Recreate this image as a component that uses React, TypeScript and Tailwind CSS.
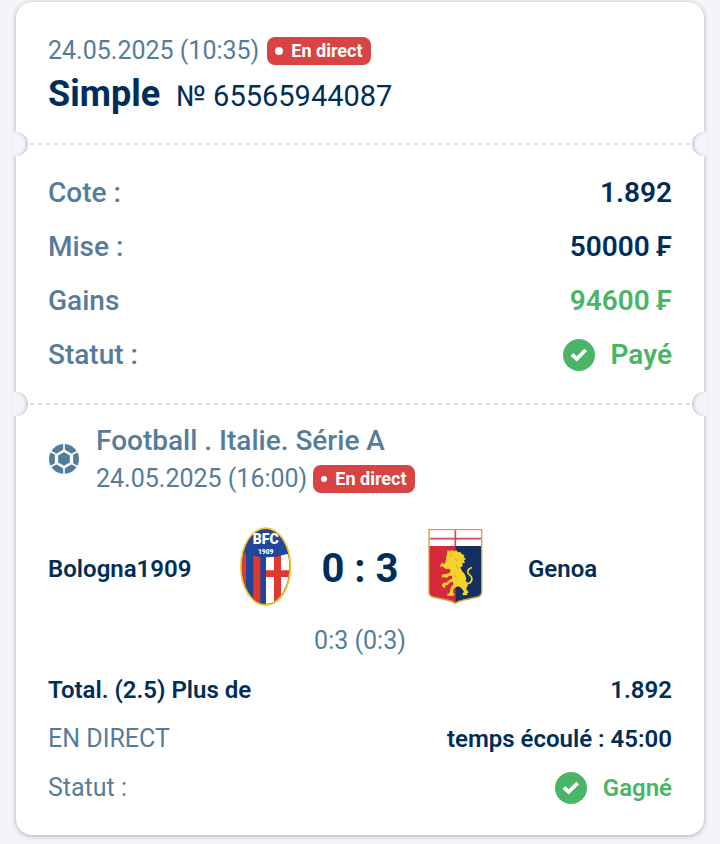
import type { ReactNode } from "react";

const Divider = () => (
  <div className="relative flex h-6 items-center px-3.5">
    <span className="absolute top-0 -left-3 size-6 rounded-full bg-[#f4f5fb] shadow-[inset_-3px_0_3px_-1px_#c9cad0] [clip-path:inset(0_0_0_9px)]" />
    <div className="h-0.5 flex-1 bg-[repeating-linear-gradient(90deg,#dddee2_0_4px,transparent_4px_8px)]" />
    <span className="absolute top-0 -right-3 size-6 rounded-full bg-[#f4f5fb] shadow-[inset_3px_0_3px_-1px_#c9cad0] [clip-path:inset(0_9px_0_0)]" />
  </div>
);

const LiveBadge = ({ small = false }: { small?: boolean }) => (
  <span className="flex h-7 items-center gap-2 rounded-lg bg-[#d84444] px-2 text-lg font-bold text-white">
    <span className={small ? "size-1.5 rounded-full bg-white" : "size-2 rounded-full bg-white"} />
    En direct
  </span>
);

const CheckIcon = () => (
  <svg viewBox="0 0 32 32" className="size-8 shrink-0" aria-hidden="true">
    <circle cx="16" cy="16" r="16" fill="#4bb567" />
    <path d="M9 15.5l4.7 4.3 9-8.8" fill="none" stroke="#fff" strokeWidth="3.8" />
  </svg>
);

const BallIcon = () => (
  <svg viewBox="0 0 32 32" className="size-8 shrink-0" aria-hidden="true">
    <circle cx="16" cy="16" r="15" fill="#557d9b" />
    <path fill="#fff" d="M16 6l3.4 2.2 4.4 2.6 1.3 1.6v7.2l-1.3 1.6-4.4 2.6L16 26l-3.4-2.2-4.4-2.6-1.3-1.6v-7.2l1.3-1.6 4.4-2.6z" />
    <path fill="#557d9b" d="M16 9.2l5.9 3.4v6.8L16 22.8l-5.9-3.4v-6.8z" />
    <path fill="none" stroke="#fff" strokeWidth="1.6" d="M16 8V0M16 24v8M23 12l7-4M23 20l7 4M9 12L2 8M9 20l-7 4" />
  </svg>
);

const BolognaCrest = () => (
  <svg viewBox="18 36 168 252" className="h-21 w-14 shrink-0" role="img" aria-label="Bologna">
    <defs>
      <clipPath id="bologna-shape">
        <ellipse cx="107" cy="155" rx="71" ry="112" />
      </clipPath>
    </defs>
    <ellipse cx="107" cy="155" rx="77" ry="118" fill="#ecc92a" />
    <ellipse cx="107" cy="155" rx="72" ry="113" fill="#c9654a" />
    <g clipPath="url(#bologna-shape)">
      <path fill="#21479b" d="M30 30h160v250H30z" />
      <path fill="#e0392f" d="M30 108h18v140H30zM70 112h21v170H70z" />
      <path fill="#fff" d="M108 118h80v160h-80z" />
      <path fill="#e0392f" d="M132 110h21v170h-21zM108 166h80v20h-80z" />
      <path fill="#21479b" d="M30 30h160v78q-80 38-160 0z" />
    </g>
    <text x="107" y="87" textAnchor="middle" fill="#fff" className="font-['Roboto'] text-[42px] font-black">BFC</text>
    <text x="107" y="117" textAnchor="middle" fill="#fff" className="font-['Roboto'] text-[20px] font-black">1909</text>
  </svg>
);

const GenoaCrest = () => (
  <svg viewBox="39 36 168 252" className="h-21 w-14 shrink-0" role="img" aria-label="Genoa">
    <path fill="#c9a43c" d="M40 42h162v188q0 14-14 18l-42 9q-16 4-25 10-9-6-25-10l-42-9q-14-4-14-18z" />
    <path fill="#fff" d="M44 46h154v47H44z" />
    <path fill="#d6293a" d="M44 93h77v169q-9-6-25-9l-40-9q-12-3-12-14z" />
    <path fill="#14305f" d="M121 93h77v137q0 11-12 14l-40 9q-16 3-25 9z" />
    <path stroke="#d6455a" strokeWidth="5" d="M121 46v47M44 71h154" />
    <g fill="#f6d22c">
      <path d="M98 106l8 3 4-5 8 5 6-3 5 6 7-1 5 7 8 3-3 5 7 6-6 4 3 8-8 1 1 9-7 3 5 11 8 9 5 12-2 8 5 6 1 11-5 7 8 11-6 5 4 3-15 1-2-5 5-6-6-9-10-7-9 3-7 6-1 10 6 7-12 3-10-1-2-5 8-2 2-12 4-9 6-7-3-7-8 2-6 7-9 3 1 7-7-2-4-7 6-7 10-1 8-8 8-3-2-9-8 1-7 6-8-3-6 2-1-8 8-3 6 1 9-5 4-3-3-9-11 1-8-5-4-8 9-3z" />
      <path d="M80 143l8 4 10-1 5 7-12 3-9-2-8 2z" />
    </g>
    <path
      d="M146 204c16 5 27-2 24-16-2-9-12-9-12-18 0-6 4-9 11-12"
      fill="none"
      stroke="#f6d22c"
      strokeWidth="5"
      strokeLinecap="round"
    />
    <path fill="none" stroke="#c9852b" strokeWidth="2" d="M104 120l8 3M118 128l8 10M124 150l6 12M116 180l10 9" />
  </svg>
);

const Row = ({ label, children }: { label: string; children: ReactNode }) => (
  <div className="flex h-[54px] items-center justify-between text-[28px]">
    <dt className="font-medium text-[#557d9b]">{label}</dt>
    <dd className="flex items-center gap-4 font-semibold text-[#012e58]">{children}</dd>
  </div>
);

const App = () => {
  return (
    <main className="min-h-screen bg-[#f4f5fb] px-4 pt-0.5 pb-2 font-['Roboto',sans-serif]">
      <article className="rounded-2xl bg-white shadow-[0_1px_5px_rgba(0,0,0,0.3)]">
        <header className="px-8 pt-8 pb-3">
          <div className="flex h-[34px] items-center gap-2 text-[25px] text-[#557d9b]">
            <time>24.05.2025 (10:35)</time>
            <LiveBadge />
          </div>
          <div className="flex items-baseline gap-4 text-[#012e58]">
            <h1 className="text-4xl leading-[52px] font-bold">Simple</h1>
            <span className="text-[29px]">№ 65565944087</span>
          </div>
        </header>

        <Divider />

        <dl className="px-8 pt-2.5 pb-2.5">
          <Row label="Cote :">1.892</Row>
          <Row label="Mise :">50000 ₣</Row>
          <Row label="Gains">
            <span className="text-[#4bb567]">94600 ₣</span>
          </Row>
          <Row label="Statut :">
            <CheckIcon />
            <span className="text-[#4bb567]">Payé</span>
          </Row>
        </dl>

        <Divider />

        <section className="px-8 pt-[5px] pb-[23px]">
          <div className="flex items-center gap-4 text-[#557d9b]">
            <BallIcon />
            <div>
              <h2 className="text-[28px] leading-10 font-medium">Football . Italie. Série A</h2>
              <div className="flex h-9 items-center gap-1.5 text-[25px]">
                <time>24.05.2025 (16:00)</time>
                <LiveBadge small />
              </div>
            </div>
          </div>

          <div className="mt-[30px] grid grid-cols-[1fr_auto_auto_auto_1fr] items-center text-2xl font-semibold text-[#012e58]">
            <span>Bologna1909</span>
            <BolognaCrest />
            <strong className="w-34 text-center text-[40px] font-bold">0 : 3</strong>
            <GenoaCrest />
            <span className="pl-11">Genoa</span>
          </div>
          <p className="mt-3 text-center text-[25px] leading-9 text-[#557d9b]">0:3 (0:3)</p>

          <dl className="mt-1.5 text-2xl font-semibold text-[#012e58]">
            <div className="flex h-[49px] items-center justify-between">
              <dt>Total. (2.5) Plus de</dt>
              <dd>1.892</dd>
            </div>
            <div className="flex h-[49px] items-center justify-between">
              <dt className="text-[25px] font-normal text-[#557d9b]">EN DIRECT</dt>
              <dd>temps écoulé : 45:00</dd>
            </div>
            <div className="flex h-[49px] items-center justify-between">
              <dt className="text-[25px] font-normal text-[#557d9b]">Statut :</dt>
              <dd className="flex items-center gap-4 text-[#4bb567]">
                <CheckIcon />
                Gagné
              </dd>
            </div>
          </dl>
        </section>
      </article>
    </main>
  );
};

export default App;
